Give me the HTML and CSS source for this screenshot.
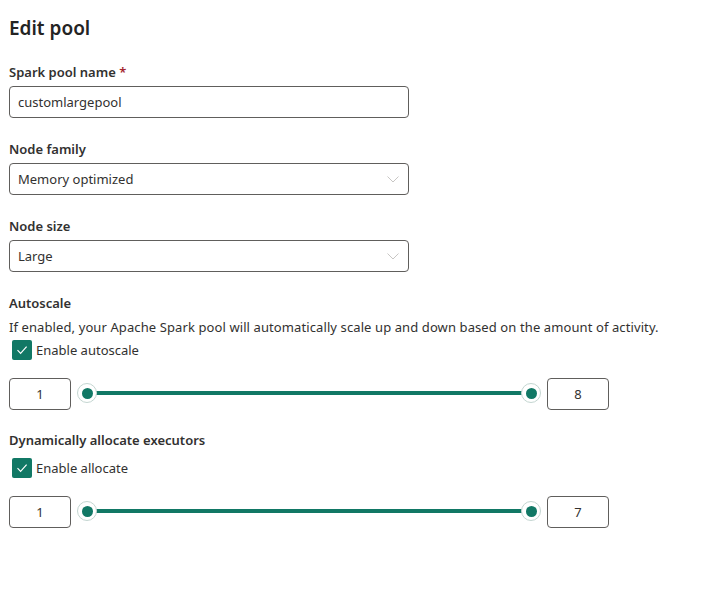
FILE: index.html
```html
<!DOCTYPE html>
<html>
<head>
<meta charset="utf-8">
<link rel="stylesheet" href="styles.css">
</head>
<body>
<div class="panel">
  <h1 class="title">Edit pool</h1>

  <div class="field">
    <div class="label">Spark pool name <span class="req">*</span></div>
    <div class="control">customlargepool</div>
  </div>

  <div class="field">
    <div class="label">Node family</div>
    <div class="control select">
      <span>Memory optimized</span>
      <svg class="chev" width="12" height="7" viewBox="0 0 12 7"><path d="M0.5 0.5 L6 6 L11.5 0.5" fill="none" stroke="#c8c6c4" stroke-width="1"/></svg>
    </div>
  </div>

  <div class="field">
    <div class="label">Node size</div>
    <div class="control select">
      <span>Large</span>
      <svg class="chev" width="12" height="7" viewBox="0 0 12 7"><path d="M0.5 0.5 L6 6 L11.5 0.5" fill="none" stroke="#c8c6c4" stroke-width="1"/></svg>
    </div>
  </div>

  <div class="section">
    <div class="label">Autoscale</div>
    <div class="desc">If enabled, your Apache Spark pool will automatically scale up and down based on the amount of activity.</div>
    <div class="check">
      <span class="box"><svg width="14" height="14" viewBox="0 0 14 14"><path d="M2.5 7.2 L5.6 10.3 L11.6 3.6" fill="none" stroke="#fff" stroke-width="1.2"/></svg></span>
      <span>Enable autoscale</span>
    </div>
    <div class="range">
      <div class="num">1</div>
      <div class="slider">
        <div class="track"></div>
        <span class="thumb"></span>
        <span class="thumb"></span>
      </div>
      <div class="num">8</div>
    </div>
  </div>

  <div class="section second">
    <div class="label">Dynamically allocate executors</div>
    <div class="check tight">
      <span class="box"><svg width="14" height="14" viewBox="0 0 14 14"><path d="M2.5 7.2 L5.6 10.3 L11.6 3.6" fill="none" stroke="#fff" stroke-width="1.2"/></svg></span>
      <span>Enable allocate</span>
    </div>
    <div class="range">
      <div class="num">1</div>
      <div class="slider">
        <div class="track"></div>
        <span class="thumb"></span>
        <span class="thumb"></span>
      </div>
      <div class="num">7</div>
    </div>
  </div>
</div>
</body>
</html>
```

FILE: styles.css
```css
html, body {
  margin: 0;
  padding: 0;
  background: #ffffff;
}
body {
  font-family: "Noto Sans", "Open Sans", sans-serif;
  color: #323130;
  font-size: 13px;
}
.panel {
  padding: 14px 0 0 9px;
  width: 600px;
}
.title {
  margin: 0;
  font-size: 19px;
  line-height: 28px;
  font-weight: 600;
  color: #242424;
}
.field {
  margin-top: 20px;
}
.field + .field {
  margin-top: 21px;
}
.label {
  font-size: 13px;
  line-height: 20px;
  font-weight: 600;
  color: #323130;
}
.req {
  color: #a4262c;
}
.control {
  margin-top: 4px;
  width: 400px;
  height: 32px;
  box-sizing: border-box;
  border: 1px solid #605e5c;
  border-radius: 4px;
  padding: 0 8px;
  display: flex;
  align-items: center;
  font-size: 13px;
  color: #323130;
}
.select {
  justify-content: space-between;
  padding-right: 9px;
}
.chev {
  display: block;
}
.section {
  margin-top: 21px;
}
.section.second {
  margin-top: 20px;
}
.desc {
  margin-top: 4px;
  line-height: 20px;
  font-size: 13px;
  letter-spacing: 0.1px;
  white-space: nowrap;
}
.check {
  margin-top: 3px;
  display: flex;
  align-items: center;
  gap: 4px;
  padding-left: 3px;
  line-height: 20px;
}
.check.tight {
  margin-top: 8px;
}
.box {
  width: 20px;
  height: 20px;
  border-radius: 2px;
  background: #117865;
  display: flex;
  align-items: center;
  justify-content: center;
}
.box svg {
  display: block;
}
.range {
  margin-top: 18px;
  display: flex;
  align-items: center;
}
.num {
  width: 62px;
  height: 32px;
  box-sizing: border-box;
  border: 1px solid #605e5c;
  border-radius: 4px;
  display: flex;
  align-items: center;
  justify-content: center;
  font-size: 13px;
}
.slider {
  flex: 1;
  height: 32px;
  margin: 0 6px;
  display: flex;
  align-items: center;
  justify-content: space-between;
  position: relative;
}
.track {
  position: absolute;
  left: 10px;
  right: 10px;
  top: 13px;
  height: 4px;
  background: #117865;
}
.thumb {
  position: relative;
  width: 20px;
  height: 20px;
  margin-top: -2px;
  box-sizing: border-box;
  border-radius: 50%;
  background: #ffffff;
  border: 1.5px solid #c4d6d1;
  display: flex;
  align-items: center;
  justify-content: center;
}
.thumb::after {
  content: "";
  width: 11px;
  height: 11px;
  border-radius: 50%;
  background: #117865;
}
```
